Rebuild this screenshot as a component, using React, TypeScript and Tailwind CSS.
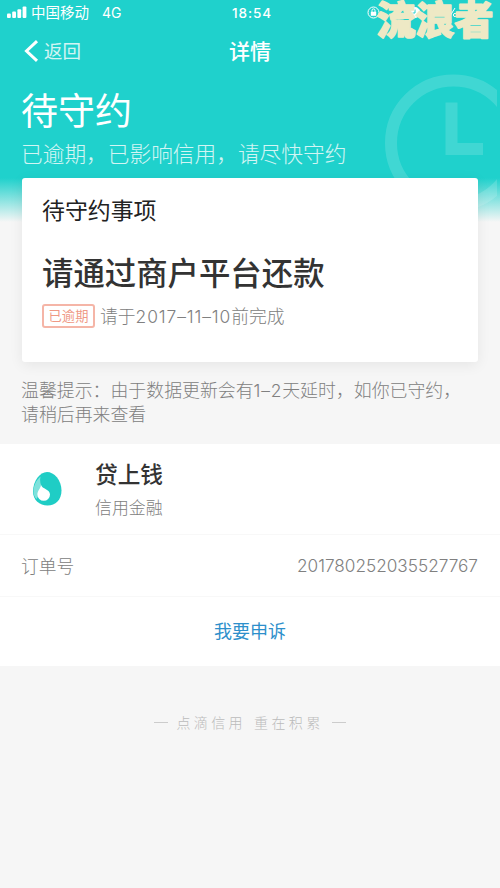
import React from 'react';

interface TextProps {
  className: string;
  children: React.ReactNode;
}

function Line({ className, children }: TextProps) {
  return <div className={`whitespace-nowrap ${className}`}>{children}</div>;
}

function StatusBar() {
  return (
    <div className="relative flex h-6 items-center text-white">
      <svg className="ml-[7px] h-3 w-5" viewBox="0 0 20 12" fill="currentColor">
        <rect x="0" y="7.5" width="3.8" height="4.5" rx="1" />
        <rect x="5.2" y="5.5" width="3.8" height="6.5" rx="1" />
        <rect x="10.4" y="3.2" width="3.8" height="8.8" rx="1" />
        <rect x="15.6" y="0.5" width="3.8" height="11.5" rx="1" />
      </svg>
      <Line className="ml-1 text-[14.5px] leading-6">中国移动</Line>
      <Line className="ml-[13px] pt-px font-[Inter] text-[14px] leading-6">4G</Line>
      <Line className="absolute left-[232px] top-px font-[Inter] text-[13.5px] font-medium leading-6 tracking-[0.9px]">
        18:54
      </Line>
      <svg className="absolute left-[367px] top-0 h-6 w-[130px]" viewBox="0 0 130 24" fill="none" stroke="currentColor">
        <circle cx="6.5" cy="12.5" r="5.5" strokeWidth="1" />
        <rect x="3.8" y="11.8" width="5.4" height="4" fill="currentColor" stroke="none" />
        <path d="M5 12v-1.6a1.5 1.5 0 0 1 3 0V12" />
        <circle cx="48" cy="12.5" r="5" fill="currentColor" />
        <path d="M48 9.5v3.5h-2.5" stroke="#1fd1cc" />
        <path d="M83 16l5-8" />
        <circle cx="88" cy="15" r="1.6" />
      </svg>
      <svg className="absolute left-[370px] top-0 h-[44px] w-[130px]" viewBox="0 0 130 44">
        <text
          x="6.5"
          y="33.5"
          className="fill-[#eee9c5] stroke-[#eee9c5] text-[39px] font-black"
          strokeWidth="1.5"
          strokeLinejoin="round"
        >
          流浪者
        </text>
      </svg>
    </div>
  );
}

function NavBar() {
  return (
    <div className="grid h-[54px] grid-cols-3 items-center text-white">
      <div className="flex items-center pl-6">
        <svg className="h-[22px] w-[15px]" viewBox="0 0 15 22" fill="none" stroke="currentColor" strokeWidth="3">
          <path d="M13 1.2 2.5 11 13 20.8" />
        </svg>
        <Line className="ml-[5px] text-[18.5px] opacity-80">返回</Line>
      </div>
      <Line className="text-center text-[21px] font-medium">详情</Line>
    </div>
  );
}

function ClockMark() {
  return (
    <svg
      className="absolute left-[380px] top-[70px] h-[150px] w-[117px]"
      viewBox="380 70 117 150"
      fill="none"
      stroke="#fff"
      strokeOpacity="0.15"
      strokeWidth="12"
    >
      <circle cx="453.5" cy="143" r="62.5" />
      <path d="M451.5 102.5V149H483" />
    </svg>
  );
}

function DropLogo() {
  return (
    <svg className="h-[34px] w-[29px]" viewBox="0 0 29 34">
      <path d="M14 0C21 0 28.5 8 28.5 18.5 28.5 28 22.5 33.5 14.5 33.5S0 28 0 19.5C0 9 7 0 14 0Z" fill="#1fcdc5" />
      <path d="M7.5 4.5C2.5 9 0.5 14 0.5 20c0 2.500 1 5 3 7l6-11C7.500 13 6.500 9 7.500 4.500Z" fill="#7fe2dc" />
      <path d="M8 13c1 4 9 4 9 9.500a6.300 6.300 0 0 1-12.600 0c0-4 3.100-5.500 3.600-9.500Z" fill="#fff" />
    </svg>
  );
}

export default function App() {
  return (
    <div className="relative min-h-[888px] w-[500px] overflow-hidden bg-[#f6f6f6] font-['Noto_Sans_CJK_SC',sans-serif]">
      <div className="absolute inset-x-0 top-0 h-[222px] bg-[linear-gradient(to_bottom,#1fd1cc_0,#1fd1cc_178px,#f6f6f6_222px)]" />
      <ClockMark />
      <div className="relative">
        <StatusBar />
        <NavBar />

        <header className="h-[100px] px-[21px] pt-1.5 text-white">
          <Line className="text-[37px] leading-[50px]">待守约</Line>
          <Line className="mt-[3px] text-[21.7px] font-light leading-8 opacity-80">已逾期，已影响信用，请尽快守约</Line>
        </header>

        <section className="mx-[22px] h-[184px] rounded-[3px] bg-white px-5 pt-[15px] shadow-[0_3px_14px_rgba(0,0,0,0.07)]">
          <Line className="text-[22.9px] leading-8 text-[#222]">待守约事项</Line>
          <Line className="mt-6 text-[31.4px] font-medium leading-[46px] text-[#333]">请通过商户平台还款</Line>
          <div className="mt-[7px] flex items-center">
            <Line className="flex h-6 w-[53px] items-center justify-center rounded-[3px] border-2 border-[#f5b5a7] text-[13.3px] text-[#ef9985]">
              已逾期
            </Line>
            <Line className="ml-[5px] text-[17.8px] font-light leading-[26px] text-[#808080]">
              请于<span className="font-[Inter] text-[17.4px] tracking-[0.9px]">2017–11–10</span>前完成
            </Line>
          </div>
        </section>

        <div className="h-[82px] px-[21px] pt-[15px] text-[17.9px] font-light leading-6 text-[#808080]">
          <Line className="h-6">
            温馨提示：由于数据更新会有<span className="font-[Inter] text-[17.4px] tracking-[0.8px]">1–2</span>天延时，如你已守约，
          </Line>
          <Line className="">请稍后再来查看</Line>
        </div>

        <section className="bg-white">
          <div className="flex h-[91px] items-center border-b border-[#f8f8f8] pl-[33px]">
            <DropLogo />
            <div className="ml-[33px]">
              <Line className="text-[22.7px] font-medium leading-8 text-[#333]">贷上钱</Line>
              <Line className="mt-1 text-[16.9px] font-light leading-[26px] text-[#808080]">信用金融</Line>
            </div>
          </div>
          <div className="flex h-[62px] items-center justify-between border-b border-[#f8f8f8] px-[22px] text-[17.8px] font-light text-[#808080]">
            <Line className="-ml-px">订单号</Line>
            <Line className="font-[Inter] text-[17.2px]">201780252035527767</Line>
          </div>
          <div className="flex h-[69px] items-center justify-center pb-0.5 text-[18px] text-[#2d8fcb]">我要申诉</div>
        </section>

        <footer className="flex items-center justify-center pt-[45px] text-[14px] font-light leading-[22px] text-[#bbb]">
          <span className="h-px w-[14px] bg-[#ccc]" />
          <Line className="ml-2 tracking-[3.4px]">点滴信用</Line>
          <Line className="ml-2 tracking-[3.4px]">重在积累</Line>
          <span className="ml-2 h-px w-[14px] bg-[#ccc]" />
        </footer>
      </div>
    </div>
  );
}
